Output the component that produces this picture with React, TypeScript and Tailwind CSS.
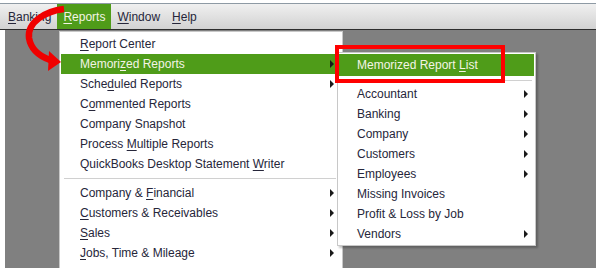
import type { ReactNode } from 'react'

type Item = { label: ReactNode; arrow?: boolean; active?: boolean }

function U({ children }: { children: ReactNode }) {
    return <span className="underline underline-offset-2">{children}</span>
}

const reportItems: (Item | 'sep')[] = [
    { label: <><U>R</U>eport Center</> },
    { label: <>Memori<U>z</U>ed Reports</>, arrow: true, active: true },
    { label: <>Sche<U>d</U>uled Reports</>, arrow: true },
    { label: <>C<U>o</U>mmented Reports</> },
    { label: <>Company Snapshot</> },
    { label: <>Process <U>M</U>ultiple Reports</> },
    { label: <>QuickBooks Desktop Statement <U>W</U>riter</> },
    'sep',
    { label: <>Company &amp; <U>F</U>inancial</>, arrow: true },
    { label: <><U>C</U>ustomers &amp; Receivables</>, arrow: true },
    { label: <><U>S</U>ales</>, arrow: true },
    { label: <><U>J</U>obs, Time &amp; Mileage</>, arrow: true },
]

const memorizedItems: (Item | 'sep')[] = [
    { label: <>Memorized Report <U>L</U>ist</>, active: true },
    'sep',
    { label: 'Accountant', arrow: true },
    { label: 'Banking', arrow: true },
    { label: 'Company', arrow: true },
    { label: 'Customers', arrow: true },
    { label: 'Employees', arrow: true },
    { label: 'Missing Invoices' },
    { label: 'Profit & Loss by Job' },
    { label: 'Vendors', arrow: true },
]

function Arrow() {
    return (
        <svg width="4" height="8" viewBox="0 0 4 8" className="shrink-0">
            <path d="M0 0 L4 4 L0 8 Z" fill="#1a1a1a" />
        </svg>
    )
}

function MenuRow({ item, indent, arrowPad, tall }: { item: Item; indent: string; arrowPad: string; tall?: boolean }) {
    return (
        <div
            className={`flex items-center justify-between ${tall ? 'h-[22px]' : 'h-5'} ${indent} ${arrowPad} ${
                item.active ? 'bg-[#4f9c19] text-[#f4f4e6]' : 'text-[#26263a]'
            }`}
        >
            <span className="whitespace-nowrap">{item.label}</span>
            {item.arrow && <Arrow />}
        </div>
    )
}

export default function App() {
    return (
        <div className="relative flex h-[268px] w-[596px] flex-col overflow-hidden bg-white font-['Liberation_Sans',Arial,sans-serif] text-[12px] leading-none">
            {/* menu bar */}
            <div className="mt-[3px] border-t border-[#8e9aa4]" />
            <div className="flex h-[25px] items-stretch bg-linear-to-b from-[#f0f0f0] to-[#d2d2d2] pl-[2px] text-[#26263a]">
                <div className="flex items-center px-[6px]"><U>B</U>anking</div>
                <div className="flex items-center bg-[#4f9c19] px-[6px] text-[#f4f4e6]"><U>R</U>eports</div>
                <div className="flex items-center px-[6px]"><U>W</U>indow</div>
                <div className="flex items-center px-[6px]"><U>H</U>elp</div>
            </div>
            <div className="h-px bg-[#2e2e2e]" />

            {/* workspace */}
            <div className="relative flex-1 bg-white pl-[5px]">
                <div className="h-full bg-[#808080]" />

                {/* Reports menu */}
                <div className="absolute top-px left-[59px] w-[284px] border border-[#c8c8c8] bg-white pt-[2px] pr-[6px] pb-4 pl-px">
                    {reportItems.map((item, i) =>
                        item === 'sep' ? (
                            <div key={i} className="flex h-[9px] items-center pl-[3px]">
                                <div className="h-px w-full bg-[#d0d0d0]" />
                            </div>
                        ) : (
                            <MenuRow key={i} item={item} indent="pl-[19px]" arrowPad="pr-[2px]" />
                        ),
                    )}
                </div>

                {/* Memorized Reports submenu */}
                <div className="absolute top-[22px] left-[337px] w-[199px] border border-[#c8c8c8] bg-white py-px pr-px shadow-[2px_2px_2px_rgba(0,0,0,0.25)]">
                    {memorizedItems.map((item, i) =>
                        item === 'sep' ? (
                            <div key={i} className="flex h-2 items-center pr-[2px]">
                                <div className="h-px w-full bg-[#d0d0d0]" />
                            </div>
                        ) : (
                            <MenuRow
                                key={i}
                                item={item}
                                indent="pl-[19px]"
                                arrowPad="pr-[6px]"
                                tall={item.active}
                            />
                        ),
                    )}
                </div>

                {/* callout box */}
                <div className="absolute top-[15px] left-[335px] h-[38px] w-[170px] border-4 border-[#ff0000]" />
            </div>

            {/* curved arrow */}
            <svg className="absolute top-0 left-0" width="70" height="80" viewBox="0 0 70 80">
                <path
                    d="M64 9 C 46 11, 27 22, 29 38 C 31 50, 39 56, 50 60"
                    fill="none"
                    stroke="#f00000"
                    strokeWidth="6.5"
                    strokeLinecap="butt"
                />
                <path d="M49 51 L61 62 L48 71 Z" fill="#f00000" />
            </svg>
        </div>
    )
}
